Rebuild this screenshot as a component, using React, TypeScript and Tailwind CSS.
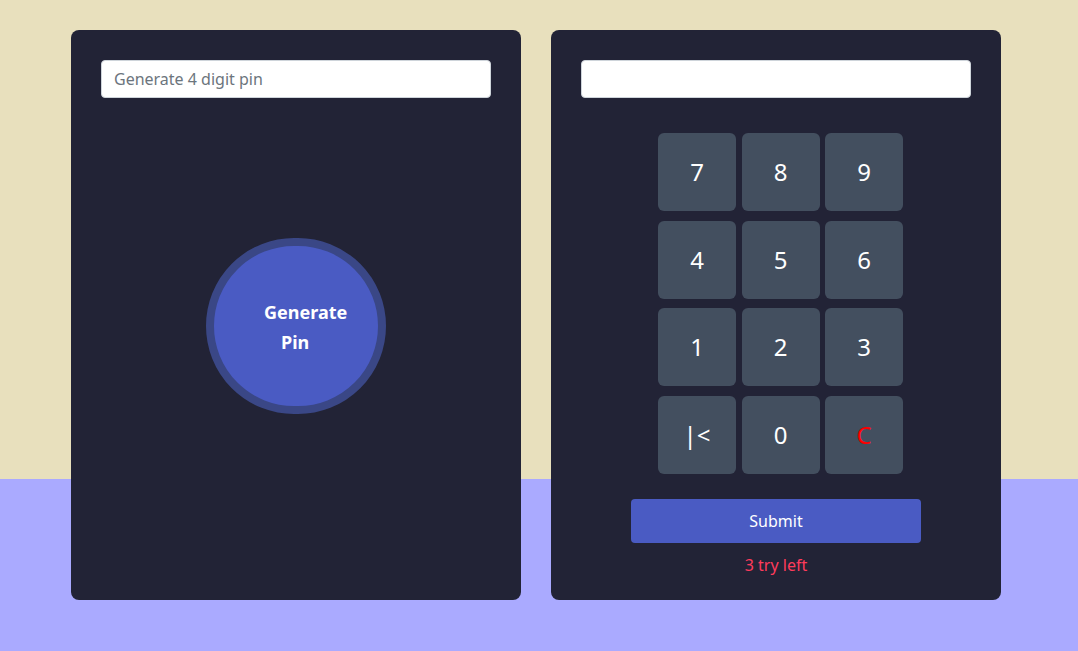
const keys = ['7', '8', '9', '4', '5', '6', '1', '2', '3', '|<', '0', 'C']

const PinInput = ({ placeholder }: { placeholder?: string }) => {
  return (
    <input
      type="text"
      placeholder={placeholder}
      className="w-full shrink-0 h-[38px] rounded-[4px] border border-[#ced4da] bg-white px-3 text-base text-[#495057] placeholder:text-[#6c757d] outline-none"
    />
  )
}

const GeneratePanel = () => {
  return (
    <div className="w-[450px] h-[570px] rounded-lg bg-[#222336] p-[30px]">
      <PinInput placeholder="Generate 4 digit pin" />
      <div className="flex justify-center mt-[140px]">
        <button className="w-[180px] h-[176px] rounded-full border-[8px] border-[#3a4786] bg-[#4a5bc3] text-white font-bold text-lg leading-[30px] flex flex-col items-start justify-center pl-[50px] pt-[2px]">
          <span>Generate</span>
          <span className="ml-[17px]">Pin</span>
        </button>
      </div>
    </div>
  )
}

const KeypadPanel = () => {
  return (
    <div className="w-[450px] h-[570px] rounded-lg bg-[#222336] p-[30px] flex flex-col items-center">
      <PinInput />
      <div className="shrink-0 grid grid-cols-[repeat(3,78px)] auto-rows-[78px] gap-x-[5.5px] gap-y-[9.7px] mt-[35px] ml-[9px]">
        {keys.map((k) => (
          <button
            key={k}
            className={`rounded-md bg-[#434f5f] text-2xl flex items-center justify-center ${
              k === 'C' ? 'text-[#ff0000]' : 'text-white'
            }`}
          >
            {k}
          </button>
        ))}
      </div>
      <button className="shrink-0 mt-[25px] w-[290px] h-[44px] rounded-[4px] bg-[#4a5bc3] text-white text-base">
        Submit
      </button>
      <p className="shrink-0 mt-[10px] text-[#ff3b5c] text-base leading-6">3 try left</p>
    </div>
  )
}

const App = () => {
  return (
    <div className="h-[651px] w-full bg-[linear-gradient(to_bottom,#e8e0bd_479px,#aaaaff_479px)] font-['Noto_Sans',sans-serif]">
      <div className="flex justify-center gap-[30px] pt-[30px] pr-[6px]">
        <GeneratePanel />
        <KeypadPanel />
      </div>
    </div>
  )
}

export default App
